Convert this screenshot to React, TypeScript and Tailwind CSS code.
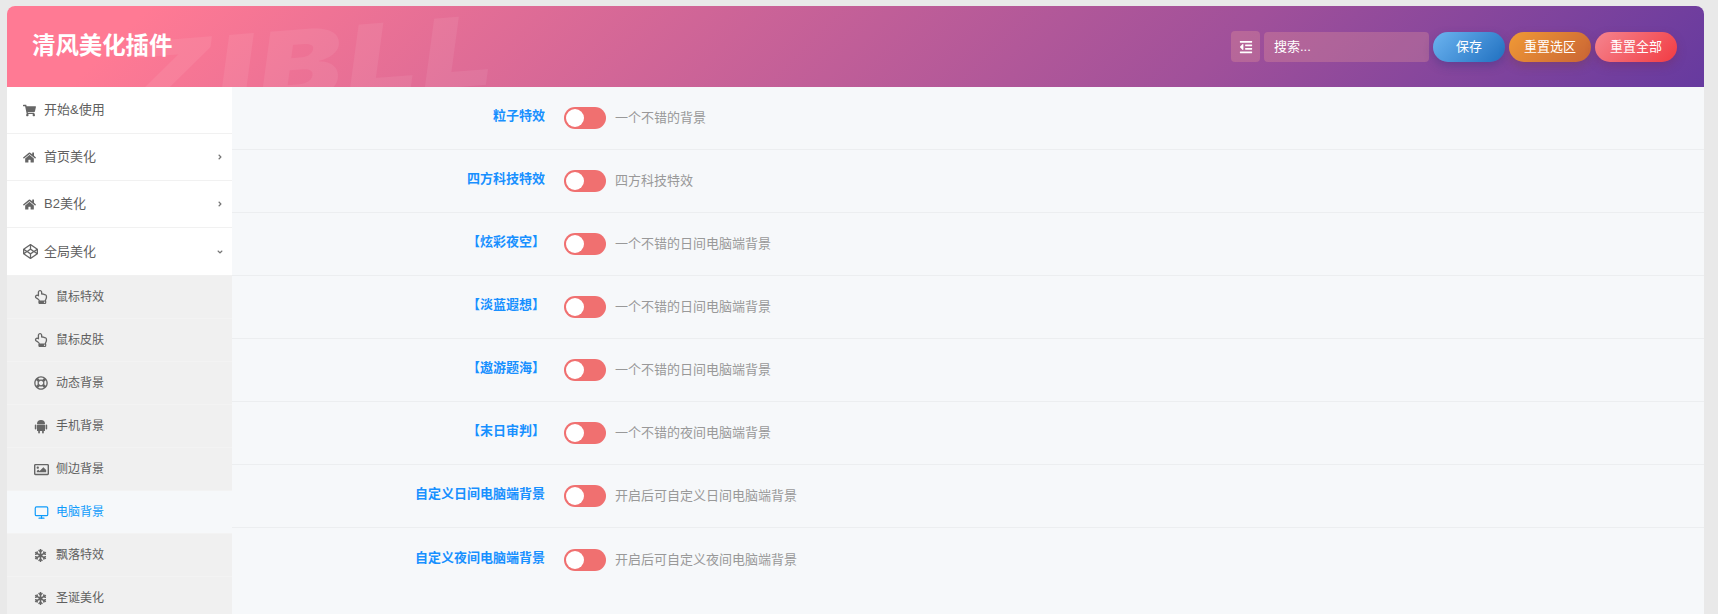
import {
  FaCodepen,
  FaHome,
  FaRegLifeRing,
  FaRegHandPointUp,
  FaRegImage,
  FaShoppingCart,
  FaSnowflake,
  FaOutdent,
  FaAngleRight,
  FaAngleDown,
} from "react-icons/fa";
import { Monitor } from "lucide-react";
import type { ReactNode } from "react";

const cjk = "font-['Liberation_Sans','Noto_Sans_CJK_SC',sans-serif]";

function AndroidIcon() {
  return (
    <svg width="14" height="15" viewBox="0 0 14 15" fill="currentColor">
      <path d="M3 5a4 4 0 0 1 8 0z" />
      <rect x="3" y="5.6" width="8" height="6.4" rx="0.6" />
      <rect x="0.8" y="5.6" width="1.6" height="5" rx="0.8" />
      <rect x="11.6" y="5.6" width="1.6" height="5" rx="0.8" />
      <rect x="4.2" y="11" width="1.7" height="3.6" rx="0.8" />
      <rect x="8.1" y="11" width="1.7" height="3.6" rx="0.8" />
    </svg>
  );
}

const topItems = [
  { label: "开始&使用", icon: <FaShoppingCart size={13} />, h: "h-[47px]" },
  { label: "首页美化", icon: <FaHome size={13} />, arrow: "right", h: "h-[47px]" },
  { label: "B2美化", icon: <FaHome size={13} />, arrow: "right", h: "h-[47px]" },
  { label: "全局美化", icon: <FaCodepen size={15} />, arrow: "down", h: "h-[48px]" },
];

const subItems: { label: string; icon: ReactNode; active?: boolean }[] = [
  { label: "鼠标特效", icon: <FaRegHandPointUp size={14} /> },
  { label: "鼠标皮肤", icon: <FaRegHandPointUp size={14} /> },
  { label: "动态背景", icon: <FaRegLifeRing size={14} /> },
  { label: "手机背景", icon: <AndroidIcon /> },
  { label: "侧边背景", icon: <FaRegImage size={15} /> },
  { label: "电脑背景", icon: <Monitor size={15} strokeWidth={1.9} />, active: true },
  { label: "飘落特效", icon: <FaSnowflake size={13} /> },
  { label: "圣诞美化", icon: <FaSnowflake size={13} /> },
];

const rows = [
  { label: "粒子特效", desc: "一个不错的背景" },
  { label: "四方科技特效", desc: "四方科技特效" },
  { label: "【炫彩夜空】", desc: "一个不错的日间电脑端背景" },
  { label: "【淡蓝遐想】", desc: "一个不错的日间电脑端背景" },
  { label: "【遨游题海】", desc: "一个不错的日间电脑端背景" },
  { label: "【末日审判】", desc: "一个不错的夜间电脑端背景" },
  { label: "自定义日间电脑端背景", desc: "开启后可自定义日间电脑端背景" },
  { label: "自定义夜间电脑端背景", desc: "开启后可自定义夜间电脑端背景" },
];

function Toggle() {
  return (
    <div className="flex h-[22px] w-[42px] shrink-0 items-center rounded-full bg-[#f07070] px-[2px]">
      <div className="h-[18px] w-[18px] rounded-full bg-white" />
    </div>
  );
}

function Pill({ className, children }: { className: string; children: ReactNode }) {
  return (
    <div
      className={`flex h-[30px] items-center justify-center rounded-full text-[13px] text-white ${className}`}
    >
      {children}
    </div>
  );
}

export default function App() {
  return (
    <div className={`h-[614px] w-[1718px] overflow-hidden bg-[#e9e9e9] pt-[6px] pl-[7px] ${cjk}`}>
      <div className="h-[608px] w-[1697px] overflow-hidden rounded-t-[8px] bg-[#f6f8fa]">
        <header className="relative flex h-[81px] items-center justify-between overflow-hidden bg-[linear-gradient(135deg,#ff7a94_8%,#a0509a_71%,#663a9f_100%)] pr-[27px] pl-[25px]">
          <div className="absolute top-[24px] left-[118px] origin-left -rotate-[4.5deg] scale-x-[1.3] font-['Inter',sans-serif] text-[96px] leading-none font-black tracking-[4px] text-white/[0.07] italic">
            ZIBLL
          </div>
          <h1 className="relative text-[23.4px] font-bold text-white">清风美化插件</h1>
          <div className="relative flex items-center gap-[4px]">
            <div className="flex h-[31px] w-[29px] items-center justify-center rounded-[4px] bg-[rgba(255,170,150,0.25)] text-white">
              <FaOutdent size={14} />
            </div>
            <div className="flex h-[30px] w-[165px] items-center rounded-[4px] bg-[rgba(255,170,150,0.25)] pl-[10px] text-[13px] text-white">
              搜索...
            </div>
            <Pill className="w-[72px] bg-[linear-gradient(135deg,#6cb4f0,#2070c0)] shadow-[0_4px_10px_rgba(40,50,120,0.35)]">
              保存
            </Pill>
            <Pill className="w-[82px] bg-[linear-gradient(135deg,#f09a35,#c96435)] shadow-[0_4px_10px_rgba(120,60,60,0.35)]">
              重置选区
            </Pill>
            <Pill className="w-[82px] bg-[linear-gradient(135deg,#f5858f,#f23b42)] shadow-[0_4px_10px_rgba(120,40,80,0.35)]">
              重置全部
            </Pill>
          </div>
        </header>
        <div className="flex">
          <aside className="w-[225px] shrink-0 bg-white">
            {topItems.map((item) => (
              <div
                key={item.label}
                className={`flex items-center border-b border-[#f1f1f1] pr-[8px] pl-[16px] text-[13px] text-[#5f5f5f] ${item.h}`}
              >
                <span className="flex w-[21px] justify-start text-[#666]">{item.icon}</span>
                <span className="flex-1">{item.label}</span>
                {item.arrow === "right" && <FaAngleRight size={8} className="text-[#777]" />}
                {item.arrow === "down" && <FaAngleDown size={8} className="text-[#777]" />}
              </div>
            ))}
            {subItems.map((item) => (
              <div
                key={item.label}
                className={`flex h-[43px] items-center border-b border-[#f3f3f3] pl-[27px] text-[12px] ${
                  item.active ? "bg-[#f6f8fa] text-[#0f9bfa]" : "bg-[#f0f0f0] text-[#5f5f5f]"
                }`}
              >
                <span className="flex w-[22px] justify-start text-[#666]">
                  <span className={item.active ? "text-[#0f9bfa]" : ""}>{item.icon}</span>
                </span>
                <span>{item.label}</span>
              </div>
            ))}
          </aside>
          <main className="flex-1">
            {rows.map((row, i) => (
              <div
                key={row.label}
                className={`flex h-[63px] items-center ${
                  i < rows.length - 1 ? "border-b border-[#eceef0]" : ""
                }`}
              >
                <div className="w-[313px] pb-[4px] text-right text-[13px] font-bold text-[#1890ff]">
                  {row.label}
                </div>
                <div className="ml-[19px]">
                  <Toggle />
                </div>
                <div className="ml-[9px] text-[13px] text-[#999]">{row.desc}</div>
              </div>
            ))}
          </main>
        </div>
      </div>
    </div>
  );
}
